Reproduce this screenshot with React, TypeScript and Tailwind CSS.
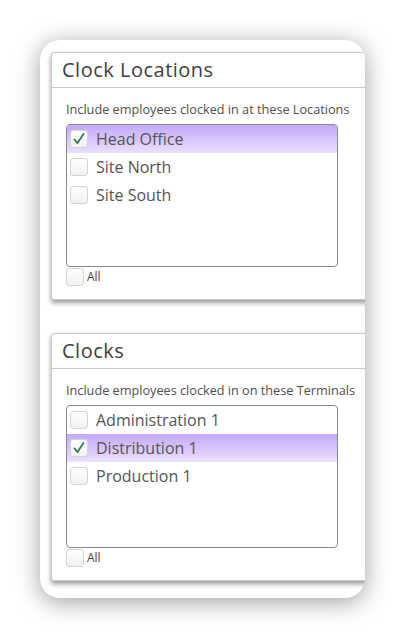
const locations = [
  { name: "Head Office", checked: true },
  { name: "Site North", checked: false },
  { name: "Site South", checked: false },
];

const clocks = [
  { name: "Administration 1", checked: false },
  { name: "Distribution 1", checked: true },
  { name: "Production 1", checked: false },
];

function Box({ checked }: { checked: boolean }) {
  return (
    <span className="flex h-[18px] w-[18px] shrink-0 items-center justify-center rounded-[3px] border border-[#d4d4d4] bg-gradient-to-b from-white to-[#f1f1f1]">
      {checked && (
        <svg width="14" height="14" viewBox="0 0 14 14">
          <path d="M2.5 7.5 L5.5 11 L11.5 2" fill="none" stroke="#2f7a55" strokeWidth="1.8" strokeLinecap="round" />
        </svg>
      )}
    </span>
  );
}

function Panel({
  title,
  hint,
  items,
}: {
  title: string;
  hint: string;
  items: { name: string; checked: boolean }[];
}) {
  return (
    <section className="w-[340px] shrink-0 rounded-[3px] border border-[#c9c9c9] bg-white shadow-[0_3px_5px_rgba(0,0,0,0.4)]">
      <h2 className="flex h-[35px] items-center border-b border-[#c9c9c9] px-[10px] font-['Open_Sans',sans-serif] text-[20px] font-medium tracking-[0.5px] text-[#404040]">
        {title}
      </h2>
      <div className="px-[14px] pb-[13px] pt-[13px]">
        <p className="font-['Open_Sans',sans-serif] text-[12.7px] leading-[16px] text-[#505050]">{hint}</p>
        <ul className="mt-[7px] h-[143px] w-[272px] overflow-hidden rounded-[4px] border border-[#8a8a8a]">
          {items.map((it) => (
            <li
              key={it.name}
              className={
                it.checked
                  ? "flex h-[28px] items-center gap-[8px] bg-gradient-to-b from-[#c3a8fa] to-[#ebe0fd] px-[3px]"
                  : "flex h-[28px] items-center gap-[8px] px-[3px]"
              }
            >
              <Box checked={it.checked} />
              <span className="font-['Open_Sans',sans-serif] text-[16px] text-[#555]">{it.name}</span>
            </li>
          ))}
        </ul>
        <label className="mt-px flex items-center gap-[3px]">
          <Box checked={false} />
          <span className="font-['Open_Sans',sans-serif] text-[12px] text-[#444]">All</span>
        </label>
      </div>
    </section>
  );
}

export default function App() {
  return (
    <div className="h-[639px] w-[405px] bg-white pl-[40px] pt-[40px]">
      <div className="flex h-[558px] w-[325px] flex-col gap-[33px] overflow-hidden rounded-[20px] bg-white pl-[11px] pt-[12px] shadow-[0_4px_24px_rgba(0,0,0,0.38)]">
        <Panel title="Clock Locations" hint="Include employees clocked in at these Locations" items={locations} />
        <Panel title="Clocks" hint="Include employees clocked in on these Terminals" items={clocks} />
      </div>
    </div>
  );
}
